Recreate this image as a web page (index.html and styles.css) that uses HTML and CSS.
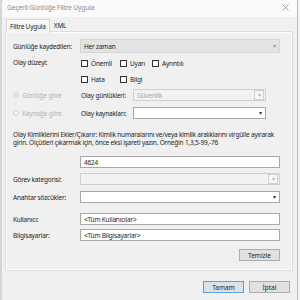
FILE: index.html
```html
<!DOCTYPE html>
<html lang="tr">
<head>
<meta charset="utf-8">
<link rel="stylesheet" href="styles.css">
</head>
<body>
<div class="window">
  <div class="titlebar">
    <span class="title">Geçerli Günlüğe Filtre Uygula</span>
    <svg class="close" width="7" height="7" viewBox="0 0 7 7"><path d="M0.5 0.5L6.5 6.5M6.5 0.5L0.5 6.5" stroke="#8c8c8c" stroke-width="0.8"/></svg>
  </div>
  <div class="body">
    <div class="tabs">
      <div class="tab active">Filtre Uygula</div>
      <div class="tab">XML</div>
    </div>
    <div class="panel">
      <div class="row r-logged">
        <span class="label">Günlüğe kaydedilen:</span>
        <div class="combo readonly"><span class="value">Her zaman</span><span class="arrow soft">&#9662;</span></div>
      </div>
      <div class="levels">
        <span class="label">Olay düzeyi:</span>
        <div class="checks">
          <label class="check"><span class="box"></span>Önemli</label>
          <label class="check"><span class="box"></span>Uyarı</label>
          <label class="check"><span class="box"></span>Ayrıntılı</label>
          <label class="check"><span class="box"></span>Hata</label>
          <label class="check"><span class="box"></span>Bilgi</label>
        </div>
      </div>
      <div class="row r-radio r-radio1">
        <span class="radio disabled checked"><span class="dot"></span>Günlüğe göre</span>
        <span class="sublabel">Olay günlükleri:</span>
        <div class="combo disabled narrow"><span class="value">Güvenlik</span><span class="arrowbox">&#9662;</span></div>
      </div>
      <div class="row r-radio r-radio2">
        <span class="radio disabled"><span class="dot"></span>Kaynağa göre</span>
        <span class="sublabel">Olay kaynakları:</span>
        <div class="combo white narrow"><span class="value"></span><span class="arrow">&#9662;</span></div>
      </div>
      <p class="help">Olay Kimliklerini Ekler/Çıkarır: Kimlik numaralarını ve/veya kimlik aralıklarını virgülle ayırarak girin. Ölçütleri çıkarmak için, önce eksi işareti yazın. Örneğin 1,3,5-99,-76</p>
      <div class="row r-id">
        <span class="label"></span>
        <div class="input">4624</div>
      </div>
      <div class="row r-task">
        <span class="label">Görev kategorisi:</span>
        <div class="combo disabled"><span class="value"></span><span class="arrowbox">&#9662;</span></div>
      </div>
      <div class="row r-key">
        <span class="label">Anahtar sözcükler:</span>
        <div class="combo white"><span class="value"></span><span class="arrow">&#9662;</span></div>
      </div>
      <div class="row r-user">
        <span class="label">Kullanıcı:</span>
        <div class="input">&lt;Tüm Kullanıcılar&gt;</div>
      </div>
      <div class="row r-comp">
        <span class="label">Bilgisayarlar:</span>
        <div class="input">&lt;Tüm Bilgisayarlar&gt;</div>
      </div>
      <div class="clear-row"><button class="btn">Temizle</button></div>
    </div>
    <div class="buttons">
      <button class="btn default">Tamam</button>
      <button class="btn">İptal</button>
    </div>
  </div>
</div>
</body>
</html>
```

FILE: styles.css
```css
html, body {
  margin: 0;
  padding: 0;
  width: 300px;
  height: 300px;
  overflow: hidden;
  background: #f4f4f4;
}
body {
  font-family: "Noto Sans", "Open Sans", sans-serif;
  font-size: 6.5px;
  letter-spacing: -0.2px;
  color: #1e1e1e;
}
.window {
  width: 295px;
  height: 300px;
  border-left: 2px solid #d6d6d6;
  border-right: 1px solid #bdbdbd;
  background: #f0f0f0;
  display: flex;
  flex-direction: column;
}
.titlebar {
  height: 15px;
  background: #fafafa;
  display: flex;
  align-items: center;
  justify-content: space-between;
  padding: 0 8px 2px 5px;
}
.title {
  color: #8d8d8d;
  font-size: 6.8px;
}
.close { display: block; }
.body {
  flex: 1;
  padding: 2px 5px 0 4px;
  display: flex;
  flex-direction: column;
}
.tabs {
  display: flex;
  height: 13px;
  align-items: flex-end;
}
.tab {
  height: 12px;
  line-height: 12px;
  padding: 0 4px;
  box-sizing: border-box;
  white-space: nowrap;
}
.tab.active {
  height: 14px;
  line-height: 13px;
  background: #f7f7f7;
  border: 1px solid #d9d9d9;
  border-bottom: none;
  margin-bottom: -1px;
  position: relative;
  z-index: 1;
  padding: 0 3px;
}
.panel {
  height: 238px;
  box-sizing: border-box;
  border: 1px solid #fdfdfd;
  box-shadow: 0 0 0 1px #dedede;
  background: #f0f0f0;
  padding: 6px 11px 0 6px;
  display: flex;
  flex-direction: column;
}
.row {
  display: flex;
  align-items: center;
}
.label {
  width: 67px;
  flex: none;
  white-space: nowrap;
}
.combo, .input {
  flex: 1;
  height: 12px;
  box-sizing: border-box;
  display: flex;
  align-items: center;
  padding-left: 3px;
  position: relative;
}
.combo .value { flex: 1; }
.combo.readonly {
  height: 14px;
  background: #e3e3e3;
  border: 1px solid #d6d6d6;
}
.combo.white, .input {
  background: #fff;
  border: 1px solid #a8a8a8;
}
.combo.disabled {
  background: #f2f2f2;
  border: 1px solid #cfcfcf;
  color: #a5a5a5;
}
.combo.narrow { flex: none; width: 133px; }
.arrow {
  width: 9px;
  text-align: center;
  font-size: 6px;
  color: #333;
}
.arrow.soft { color: #9a9a9a; }
.arrowbox {
  width: 8px;
  height: 8px;
  margin-right: 1px;
  border: 1px solid #d0d0d0;
  background: #f6f6f6;
  font-size: 6px;
  line-height: 8px;
  text-align: center;
  color: #b3b3b3;
}
.levels {
  display: flex;
  margin-top: 2px;
}
.levels .label { padding-top: 3px; }
.checks {
  display: grid;
  grid-template-columns: 39px 32px auto;
  grid-auto-rows: 16px;
  padding-left: 1px;
}
.check {
  display: flex;
  align-items: center;
  gap: 3px;
}
.box {
  width: 7px;
  height: 7px;
  border: 1px solid #333;
  background: #fff;
  box-sizing: border-box;
}
.r-radio { height: 12px; }
.r-radio1 { margin-top: 2px; }
.r-radio2 { margin-top: 6px; }
.radio {
  width: 68px;
  flex: none;
  display: flex;
  align-items: center;
  gap: 3px;
}
.radio.disabled { color: #b0b0b0; }
.dot {
  width: 6px;
  height: 6px;
  border-radius: 50%;
  border: 1px solid #d0d0d0;
  background: #f8f8f8;
  position: relative;
  box-sizing: border-box;
}
.radio.checked .dot::after {
  content: "";
  position: absolute;
  left: 1px;
  top: 1px;
  width: 2px;
  height: 2px;
  border-radius: 50%;
  background: #c8c8c8;
}
.sublabel {
  width: 52px;
  flex: none;
}
.help {
  margin: 12px 0 0 0;
  line-height: 8px;
  padding-right: 2px;
}
.r-id { margin-top: 9px; }
.r-task { margin-top: 5px; }
.r-key { margin-top: 6px; }
.r-user { margin-top: 10px; }
.r-comp { margin-top: 4px; }
.clear-row {
  display: flex;
  justify-content: flex-end;
  margin-top: 8px;
}
.btn {
  font: inherit;
  color: #1e1e1e;
  width: 41px;
  height: 12px;
  padding: 0;
  background: #e1e1e1;
  border: 1px solid #adadad;
  box-sizing: border-box;
}
.btn.default {
  border: 1px solid #5aa0dc;
  box-shadow: inset 0 0 0 1px #cfe4f7;
}
.buttons {
  display: flex;
  justify-content: flex-end;
  gap: 5px;
  margin-top: 11px;
  padding-right: 2px;
}
```
